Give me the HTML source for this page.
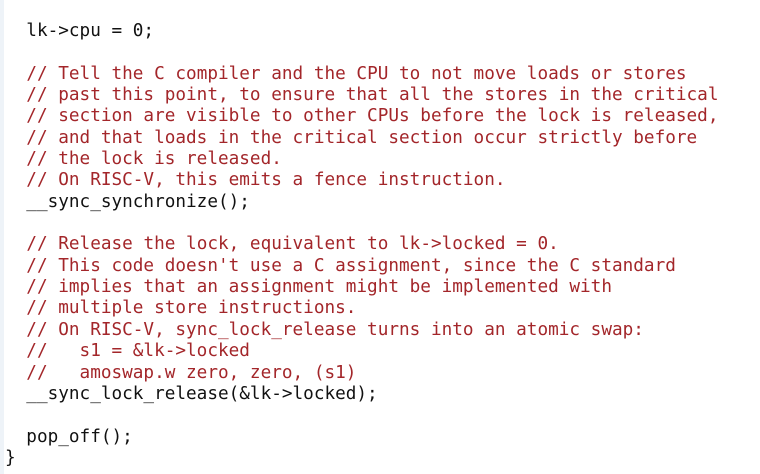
<!DOCTYPE html>
<html><head><style>
html,body{margin:0;padding:0;background:#fff;width:760px;height:474px;overflow:hidden}
pre{margin:0;position:absolute;left:5px;top:21px;font-family:"DejaVu Sans Mono","Liberation Mono",monospace;font-size:17.7px;line-height:21.35px;color:#111}
.c{color:#a3262a}
.edge{position:absolute;left:0;top:0;width:4px;height:474px;background:#eef3f8}
</style></head><body>
<div class="edge"></div>
<pre>  lk-&gt;cpu = 0;

  <span class="c">// Tell the C compiler and the CPU to not move loads or stores
  // past this point, to ensure that all the stores in the critical
  // section are visible to other CPUs before the lock is released,
  // and that loads in the critical section occur strictly before
  // the lock is released.
  // On RISC-V, this emits a fence instruction.</span>
  __sync_synchronize();

  <span class="c">// Release the lock, equivalent to lk-&gt;locked = 0.
  // This code doesn't use a C assignment, since the C standard
  // implies that an assignment might be implemented with
  // multiple store instructions.
  // On RISC-V, sync_lock_release turns into an atomic swap:
  //   s1 = &amp;lk-&gt;locked
  //   amoswap.w zero, zero, (s1)</span>
  __sync_lock_release(&amp;lk-&gt;locked);

  pop_off();
}</pre>
</body></html>
